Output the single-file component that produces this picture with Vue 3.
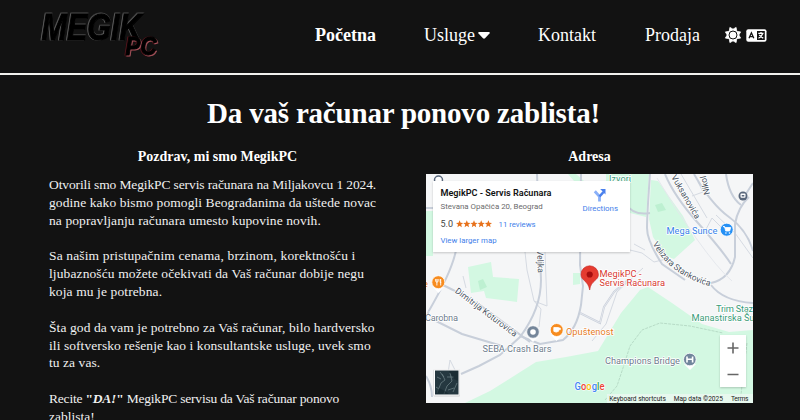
<script setup>
const intro = [
  [
    ['Otvorili smo MegikPC servis računara na Miljakovcu 1 2024.', -0.12],
    ['godine kako bismo pomogli Beograđanima da uštede novac', 0.08],
    ['na popravljanju računara umesto kupovine novih.', 0.09],
  ],
  [
    ['Sa našim pristupačnim cenama, brzinom, korektnošću i', 0.14],
    ['ljubaznošću možete očekivati da Vaš računar dobije negu', 0.11],
    ['koja mu je potrebna.', 0.11],
  ],
  [
    ['Šta god da vam je potrebno za Vaš računar, bilo hardversko', 0.09],
    ['ili softversko rešenje kao i konsultantske usluge, uvek smo', 0.07],
    ['tu za vas.', 0.06],
  ],
]
</script>

<template>
  <div class="page">
    <header class="bar">
      <svg class="logo" viewBox="36 8 130 54" width="130" height="54" aria-label="MegikPC">
        <text class="mark" x="41.5" y="40.3" textLength="100" lengthAdjust="spacingAndGlyphs">MEGIK</text>
        <text class="mark-pc" x="125.5" y="54.5" textLength="31" lengthAdjust="spacingAndGlyphs">PC</text>
      </svg>
      <nav class="nav">
        <a class="active">Početna</a>
        <a class="services">Usluge<svg width="12" height="7" viewBox="0 0 12 7"><path d="M1.2 0h9.6q1.6.3.7 1.6L7 6.3q-1 .9-2 0L.5 1.6Q-.4.3 1.2 0z" fill="#fff" /></svg></a>
        <a class="contact">Kontakt</a>
        <a class="sale">Prodaja</a>
      </nav>
      <div class="tools">
        <svg width="18" height="18" viewBox="-9 -9 18 18">
          <path fill="#fff" stroke="#fff" stroke-width=".8" stroke-linejoin="round" d="M0-5.800 3.100-7.600 3.700-3.700 7.600-3.100 5.800 0 7.600 3.100 3.700 3.700 3.100 7.600 0 5.800-3.100 7.600-3.700 3.700-7.600 3.100-5.800 0-7.600-3.100-3.700-3.700-3.100-7.600z" />
          <circle r="4" fill="#fff" stroke="#121212" stroke-width="1" />
        </svg>
        <svg width="21" height="13" viewBox="0 0 21 13">
          <rect x=".3" y=".3" width="20.2" height="12.4" rx="2" fill="#fff" />
          <path d="M11 2h7.800v9H11z" fill="#121212" />
          <path d="M3 9.300 5.400 3.800 7.800 9.300M4 7.700h2.800" fill="none" stroke="#121212" stroke-width="1.300" />
          <path d="M12.300 4.300h5.200M15 3v1.200M16.700 4.500Q15.700 7.800 12.500 9.300M13.200 6l4 3.300" fill="none" stroke="#fff" stroke-width="1.200" />
        </svg>
      </div>
    </header>

    <main>
      <h1>Da vaš računar ponovo zablista!</h1>
      <div class="columns">
        <section class="about">
          <h2>Pozdrav, mi smo MegikPC</h2>
          <p v-for="(lines, i) in intro" :key="i">
            <span v-for="[text, spacing] in lines" :key="text" class="line" :style="{ letterSpacing: spacing + 'px' }">{{ text }}</span>
          </p>
          <p>
            <span class="line tight">Recite <b>"<i>DA!</i>"</b> MegikPC servisu da Vaš računar ponovo</span>
            <span class="line">zablista!</span>
          </p>
        </section>

        <section class="address">
          <h2>Adresa</h2>
          <div class="map">
            <svg class="canvas" viewBox="426 174 327 229" width="327" height="229">
              <rect x="426" y="174" width="327" height="229" fill="#f5f6f7" />
              <g fill="#d3f8e2">
                <path d="M465 403 490 391 536 362 566 357 598 351 621 313 640 290 648 287 672 303 702 324 729 332 753 330V403z" />
                <path d="M568 174h8l8 7h-10zM606 174h43l-3 43-16-4V181h-24z" />
                <path d="M651 180l7 1 25 35 12 24-21 19-8-3-13-19-4-18z" />
                <path d="M468 267l23-5 2 15 26 2-2 23-31-4-2-7-13 2z" />
                <path d="M573 273l7 0v11l-7 1zM426 211h7v45h-7z" />
              </g>
              <path d="M478 281l5-2 4 8-7 3zM655 205l7-2 4 7-8 2z" fill="#bdf0d1" />
              <g class="minor">
                <path d="M525 252 527 270 534 301 547 306 545 252" />
                <path d="M539 327 541 309 534 301M463 276l3 12M448 373l2-13 6 12" />
                <path d="M681 174 691 191 707 218M692 196 703 192 698 182M716 215 735 233 753 258M704 233 712 218 722 228" />
                <path d="M630 250 642 253 654 262 666 259M634 244 645 250" />
                <path d="M592 341 606 324 617 292 643 268" />
                <path class="trail" d="M605 400 617 386 624 365 630 346 642 330 660 323 690 326 723 333M747 343 740 403" />
              </g>
              <g class="road">
                <path d="M457 245C454 266 441 290 426 316M441 284 453 290 480 305 530 342M434 320 462 334 502 346" />
                <path d="M461 374 479 366 500 355 520 337Q541 309 541 280L537 174" />
                <path d="M520 336 540 344 563 340Q577 329 581 305L583 286 580 265 581 174" />
                <path d="M580 313 600 323 604 307 614 292 628 280" />
                <path d="M650 174Q647 215 647 228T662 264L685 280M711 283Q730 279 735 257V224Q738 207 749 197" />
                <path d="M650 213Q633 216 625 203M726 174Q729 196 741 205M753 183 742 200" />
                <path d="M665 174Q674 196 698 223T731 264M694 174Q711 204 729 217T753 251" />
                <path d="M711 285Q723 301 753 303M426 208H434V220M426 376Q432 386 432 397" />
              </g>
              <g class="road-core">
                <path d="M657 178Q674 207 696 238T732 281" />
                <path d="M580 313 600 323 604 307 614 292 628 280" />
              </g>

              <g class="street">
                <text transform="translate(454.5 292) rotate(37)" textLength="75">Dimitrija Koturovića</text>
                <text transform="translate(671 177) rotate(60)" textLength="49">Vuksanovića</text>
                <text transform="translate(710 194) rotate(-103)" textLength="19">Nikol</text>
                <text transform="translate(537 250) rotate(88)" textLength="23">Veljka</text>
                <path id="velizara" d="M652.500 244Q672 277 713 287" fill="none" />
                <text><textPath href="#velizara" textLength="73">Velizara Stankovića</textPath></text>
              </g>
              <g class="place">
                <text x="425" y="321" textLength="33">Čarobna</text>
                <text x="482.500" y="352" textLength="69">SEBA Crash Bars</text>
                <text x="605" y="364" textLength="75">Champions Bridge</text>
                <text class="green" x="609" y="182" textLength="22">Izvori</text>
                <text class="green" x="716" y="312" textLength="42">Trim Staza</text>
                <text class="green" x="691.500" y="321" textLength="63">Manastirska Šu</text>
                <text class="orange" x="566" y="335" textLength="47.500">Opuštenost</text>
                <text class="orange" x="423" y="287">e</text>
                <text class="blue" x="666.500" y="234" textLength="51">Mega Sunce</text>
                <text class="red" x="599.500" y="277" textLength="42">MegikPC -</text>
                <text class="red" x="599.500" y="286" textLength="65.500">Servis Računara</text>
              </g>

              <path d="M589.700 290C588 280 581 281 581 274.500A8.700 8.700 0 0 1 598.400 274.500C598.400 281 591 280 589.700 290z" fill="#e53b30" stroke="#c5221f" stroke-width=".6" />
              <circle cx="589.700" cy="274.500" r="3.100" fill="#a50e0e" />
              <g class="pin">
                <path d="M433 287l5.500 6 5.500-6zM551 335l5.500 6 5.500-6zM527 336l6 6 6-6zM684 364l6 6 6-6z" fill="#fff" />
                <circle cx="438.300" cy="282.200" r="6.500" fill="#f78c1f" />
                <circle cx="556.700" cy="330" r="6.500" fill="#f78c1f" />
                <circle cx="533" cy="332" r="6.300" fill="#75869a" />
                <circle cx="689.800" cy="359.500" r="6.300" fill="#71869c" />
                <circle cx="726.700" cy="229.700" r="6.500" fill="#2590f5" />
              </g>
              <circle cx="533" cy="332" r="2.800" fill="#fff" />
              <path d="M435.700 279v2.500q1.200 1.500 2.400 0V279M436.900 279v6.500M440.700 279v6.500M440.200 279v3.500h1" fill="none" stroke="#fff" stroke-width=".9" />
              <path d="M553.800 327.500h4.700v3.800q-2.300 1.600-4.700 0zM558.500 328h1.800v1.800h-1.800" fill="#fff" stroke="#fff" stroke-width=".8" />
              <path d="M687 356.500v6M692.600 356.500v6M687 359.300h5.600" fill="none" stroke="#fff" stroke-width="1.600" />
              <path d="M723 226.500h1.500l1.200 4.500h4l1-3.500h-5z" fill="#fff" stroke="#fff" stroke-width=".8" />
              <circle cx="725.900" cy="233" r=".8" fill="#fff" /><circle cx="729.500" cy="233" r=".8" fill="#fff" />
              <circle cx="438.500" cy="180" r="4" fill="#fff" stroke="#59677b" stroke-width="1.500" />
              <circle cx="743" cy="196" r="4.500" fill="#59677b" />
              <rect x="740.500" y="193.500" width="5" height="4.300" rx="1" fill="#fff" />
              <path d="M741.700 195h2.600v1.500h-2.600z" fill="#59677b" />

              <text class="google" x="574.500" y="389.500" textLength="30" lengthAdjust="spacingAndGlyphs"><tspan fill="#4285f4">G</tspan><tspan fill="#ea4335">o</tspan><tspan fill="#fbbc04">o</tspan><tspan fill="#4285f4">g</tspan><tspan fill="#34a853">l</tspan><tspan fill="#ea4335">e</tspan></text>
              <rect x="607" y="394" width="146" height="9" fill="#ecf8f1" opacity=".8" />
              <g class="legal">
                <text x="609.300" y="401" textLength="56.500">Keyboard shortcuts</text>
                <text x="673.700" y="401" textLength="49.300">Map data ©2025</text>
                <text x="731" y="401" textLength="17.500">Terms</text>
              </g>

              <rect x="433.500" y="369.500" width="26.500" height="27" rx="1" fill="#000" opacity=".15" />
              <rect x="434" y="369.500" width="25.500" height="26" fill="#fff" />
              <rect x="435" y="370.500" width="23.500" height="24" fill="#253840" />
              <path d="M437 393 441 383 445 380 442 374M444 394 447 386 452 381 450 373M453 392 457 383M437 377 441 379M448 390 454 388M436 387 439 389M447 377 454 377M440 372 444 377" fill="none" stroke="#71858a" stroke-width=".7" />
              <path d="M435 394 439 388 445 391 449 394zM449 371l5 8 4 2v-10z" fill="#14252b" opacity=".6" />
            </svg>

            <div class="card">
              <div class="card-main">
                <strong>MegikPC - Servis Računara</strong>
                <span class="street-line">Stevana Opačića 20, Beograd</span>
                <span class="rating">
                  <span class="score">5.0</span>
                  <svg width="36" height="8" viewBox="0 0 36 8">
                    <path v-for="n in 5" :key="n" :transform="`translate(${(n - 1) * 7.2} 0)`" d="M3.600.2 4.600 2.700 7.200 2.900 5.200 4.600 5.800 7.200 3.600 5.800 1.400 7.200 2 4.600 0 2.900 2.600 2.700z" fill="#e7711b" />
                  </svg>
                  <a>11 reviews</a>
                </span>
                <a class="larger">View larger map</a>
              </div>
              <div class="directions">
                <svg width="14" height="14" viewBox="0 0 14 14">
                  <path d="M6.500 13.500V8.500L1.800 3.200" fill="none" stroke="#8ab0f8" stroke-width="2.800" />
                  <path d="M6.500 8.500 10.500 4" fill="none" stroke="#4a80ed" stroke-width="2.600" />
                  <path d="M7.200 1h5.300v5.500z" fill="#4a80ed" />
                </svg>
                <a>Directions</a>
              </div>
            </div>

            <div class="zoom">
              <svg width="26" height="52" viewBox="0 0 26 52">
                <path d="M7.500 13h11M13 7.500v11M7.500 39.500h11" stroke="#666" stroke-width="1.600" />
              </svg>
            </div>
          </div>
        </section>
      </div>
    </main>
  </div>
</template>

<style>
body {
  margin: 0;
  background: #121212;
}
</style>

<style scoped>
.page {
  width: 800px;
  height: 420px;
  overflow: hidden;
  background: #121212;
  color: #fff;
  font-family: "Liberation Serif", serif;
}
.bar {
  box-sizing: border-box;
  height: 75px;
  padding: 8px 32px 0 36px;
  display: flex;
  align-items: flex-start;
  border-bottom: 2px solid #f1f1ee;
}
.logo {
  flex: none;
}
.mark,
.mark-pc {
  font-family: "Liberation Sans", sans-serif;
  font-weight: bold;
  font-style: italic;
  fill: #000;
  stroke: #000;
  stroke-width: 1;
}
.mark {
  font-size: 36px;
  filter: drop-shadow(-0.7px 0.6px 0 #585858) drop-shadow(0.4px -0.4px 0 #3c3c3c);
}
.mark-pc {
  font-size: 26px;
  filter: drop-shadow(1.2px 1px 0 #a5525a) drop-shadow(-0.6px 0 0 #54141b);
}
.nav {
  display: flex;
  margin-left: 149px;
  padding-top: 15px;
  width: 386px;
  font-size: 18px;
  line-height: 24px;
  white-space: nowrap;
}
.nav a {
  flex: none;
}
.active {
  width: 109px;
  font-weight: bold;
}
.services {
  width: 114px;
}
.services svg {
  margin-left: 3px;
  vertical-align: 2px;
}
.contact {
  width: 107px;
}
.tools {
  display: flex;
  align-items: center;
  gap: 4px;
  margin-left: 23px;
  padding-top: 18px;
}
h1 {
  margin: 20px 0 0;
  padding-left: 7px;
  text-align: center;
  font-size: 29px;
  line-height: 36px;
  letter-spacing: -0.2px;
}
.columns {
  display: flex;
  margin-top: 17px;
  padding-left: 49px;
}
.about {
  width: 337px;
}
.address {
  width: 327px;
  margin-left: 40px;
}
h2 {
  margin: 0 0 10px;
  font-size: 14px;
  line-height: 18px;
  text-align: center;
}
.address h2 {
  margin-bottom: 8px;
}
p {
  margin: 0 0 17.850px;
  font-size: 13.500px;
  line-height: 17.850px;
  color: #f0f0f0;
}
.line {
  display: block;
  white-space: nowrap;
}
.tight {
  letter-spacing: -0.2px;
}
.map {
  position: relative;
  height: 229px;
  overflow: hidden;
  font-family: Roboto, sans-serif;
}
.canvas {
  display: block;
}
.minor,
.road,
.road-core {
  fill: none;
  stroke: #d5dae2;
  stroke-width: 1;
}
.road {
  stroke: #c8cfda;
  stroke-width: 2;
}
.road-core {
  stroke: #e5e8ed;
  stroke-width: 1;
}
.minor .trail {
  stroke: #aacfba;
  stroke-width: 0.7;
  stroke-dasharray: 3 1;
}
.street,
.place {
  font-size: 8.600px;
  fill: #4b5563;
  stroke: #fff;
  stroke-width: 1.500;
  paint-order: stroke;
}
.street path {
  stroke: none;
}
.place {
  font-size: 9.300px;
  fill: #6c7b8c;
}
.green {
  fill: #389b77;
}
.orange {
  fill: #e67b24;
}
.blue {
  fill: #3583ea;
}
.red {
  fill: #d83831;
}
.pin circle {
  stroke: #fff;
  stroke-width: 0.8;
}
.google {
  font-family: Roboto, sans-serif;
  font-size: 11px;
  font-weight: 500;
  stroke: #fff;
  stroke-width: 1.200;
  paint-order: stroke;
}
.legal {
  font-size: 6.600px;
  fill: #222;
}
.card {
  position: absolute;
  left: 7px;
  top: 7px;
  box-sizing: border-box;
  width: 197px;
  height: 71px;
  padding: 6px 12px 0 7.500px;
  display: flex;
  justify-content: space-between;
  background: #fff;
  box-shadow: 0 1px 2px #0003;
  white-space: nowrap;
}
.card a {
  color: #4280ea;
}
.card-main {
  display: flex;
  flex-direction: column;
  font-size: 7.800px;
}
.card-main strong {
  font-size: 9.100px;
  line-height: 12px;
  font-weight: 600;
  color: #111;
}
.street-line {
  margin-top: 2px;
  line-height: 12px;
  font-size: 7.900px;
  color: #6b6b6b;
}
.rating {
  display: flex;
  align-items: center;
  height: 12px;
  margin-top: 5px;
}
.score {
  width: 15px;
  font-size: 9px;
  color: #444;
}
.rating a {
  margin-left: 7px;
}
.larger {
  margin-top: 5px;
  line-height: 11px;
}
.directions {
  display: flex;
  flex-direction: column;
  align-items: center;
  gap: 1px;
  padding-top: 1px;
  font-size: 7.900px;
  line-height: 12px;
}
.zoom {
  position: absolute;
  left: 294px;
  top: 161px;
  width: 26px;
  height: 52px;
  background: #fff;
  box-shadow: 0 1px 2px #0003;
}
</style>
